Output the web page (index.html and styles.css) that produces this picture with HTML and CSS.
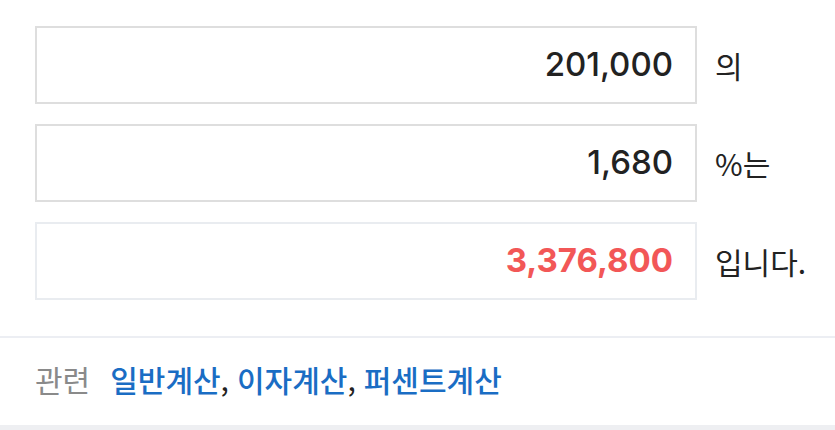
FILE: index.html
```html
<!DOCTYPE html>
<html lang="ko">
<head>
  <meta charset="UTF-8">
  <title>퍼센트 계산</title>
  <meta name="viewport" content="width=device-width, initial-scale=1.0"/>
  <link rel="stylesheet" href="styles.css">
</head>
<body>
  <div class="calc">
    <div class="row">
      <div class="box">201,000</div>
      <span class="unit">의</span>
    </div>
    <div class="row">
      <div class="box">1,680</div>
      <span class="unit">%는</span>
    </div>
    <div class="row">
      <div class="box result">3,376,800</div>
      <span class="unit">입니다.</span>
    </div>
  </div>

  <div class="related">
    <span class="label">관련</span>
    <a href="#">일반계산</a><span class="comma">,</span>
    <a href="#">이자계산</a><span class="comma">,</span>
    <a href="#">퍼센트계산</a>
  </div>
  <div class="footer-bar"></div>
</body>
</html>
```

FILE: styles.css
```css
body {
  margin: 0;
  background: #fff;
  font-family: "Noto Sans CJK KR", "Noto Sans", sans-serif;
  color: #222;
}
.calc {
  padding: 26px 0 36px 35px;
  display: flex;
  flex-direction: column;
  gap: 20px;
  border-bottom: 2px solid #eceef3;
}
.row {
  display: flex;
  align-items: center;
  gap: 18px;
}
.box {
  box-sizing: border-box;
  width: 662px;
  height: 78px;
  border: 2px solid #dedede;
  padding-right: 22px;
  padding-bottom: 2px;
  display: flex;
  align-items: center;
  justify-content: flex-end;
  font-family: Inter, "Noto Sans CJK KR", sans-serif;
  font-size: 33px;
  font-weight: 500;
  color: #222;
}
.box.result {
  border-color: #e9ecf0;
  color: #f25757;
  font-weight: 700;
}
.unit {
  font-size: 30px;
  color: #222;
}
.related {
  height: 87px;
  padding-left: 35px;
  padding-bottom: 6px;
  box-sizing: border-box;
  display: flex;
  align-items: center;
  font-size: 30px;
}
.related .label {
  color: #8a8a8a;
  margin-right: 20px;
}
.related a {
  color: #1a6dc4;
  text-decoration: none;
  font-weight: 500;
}
.related .comma {
  color: #222;
  margin-right: 8px;
}
.footer-bar {
  height: 6px;
  background: #eeeff2;
}
```
